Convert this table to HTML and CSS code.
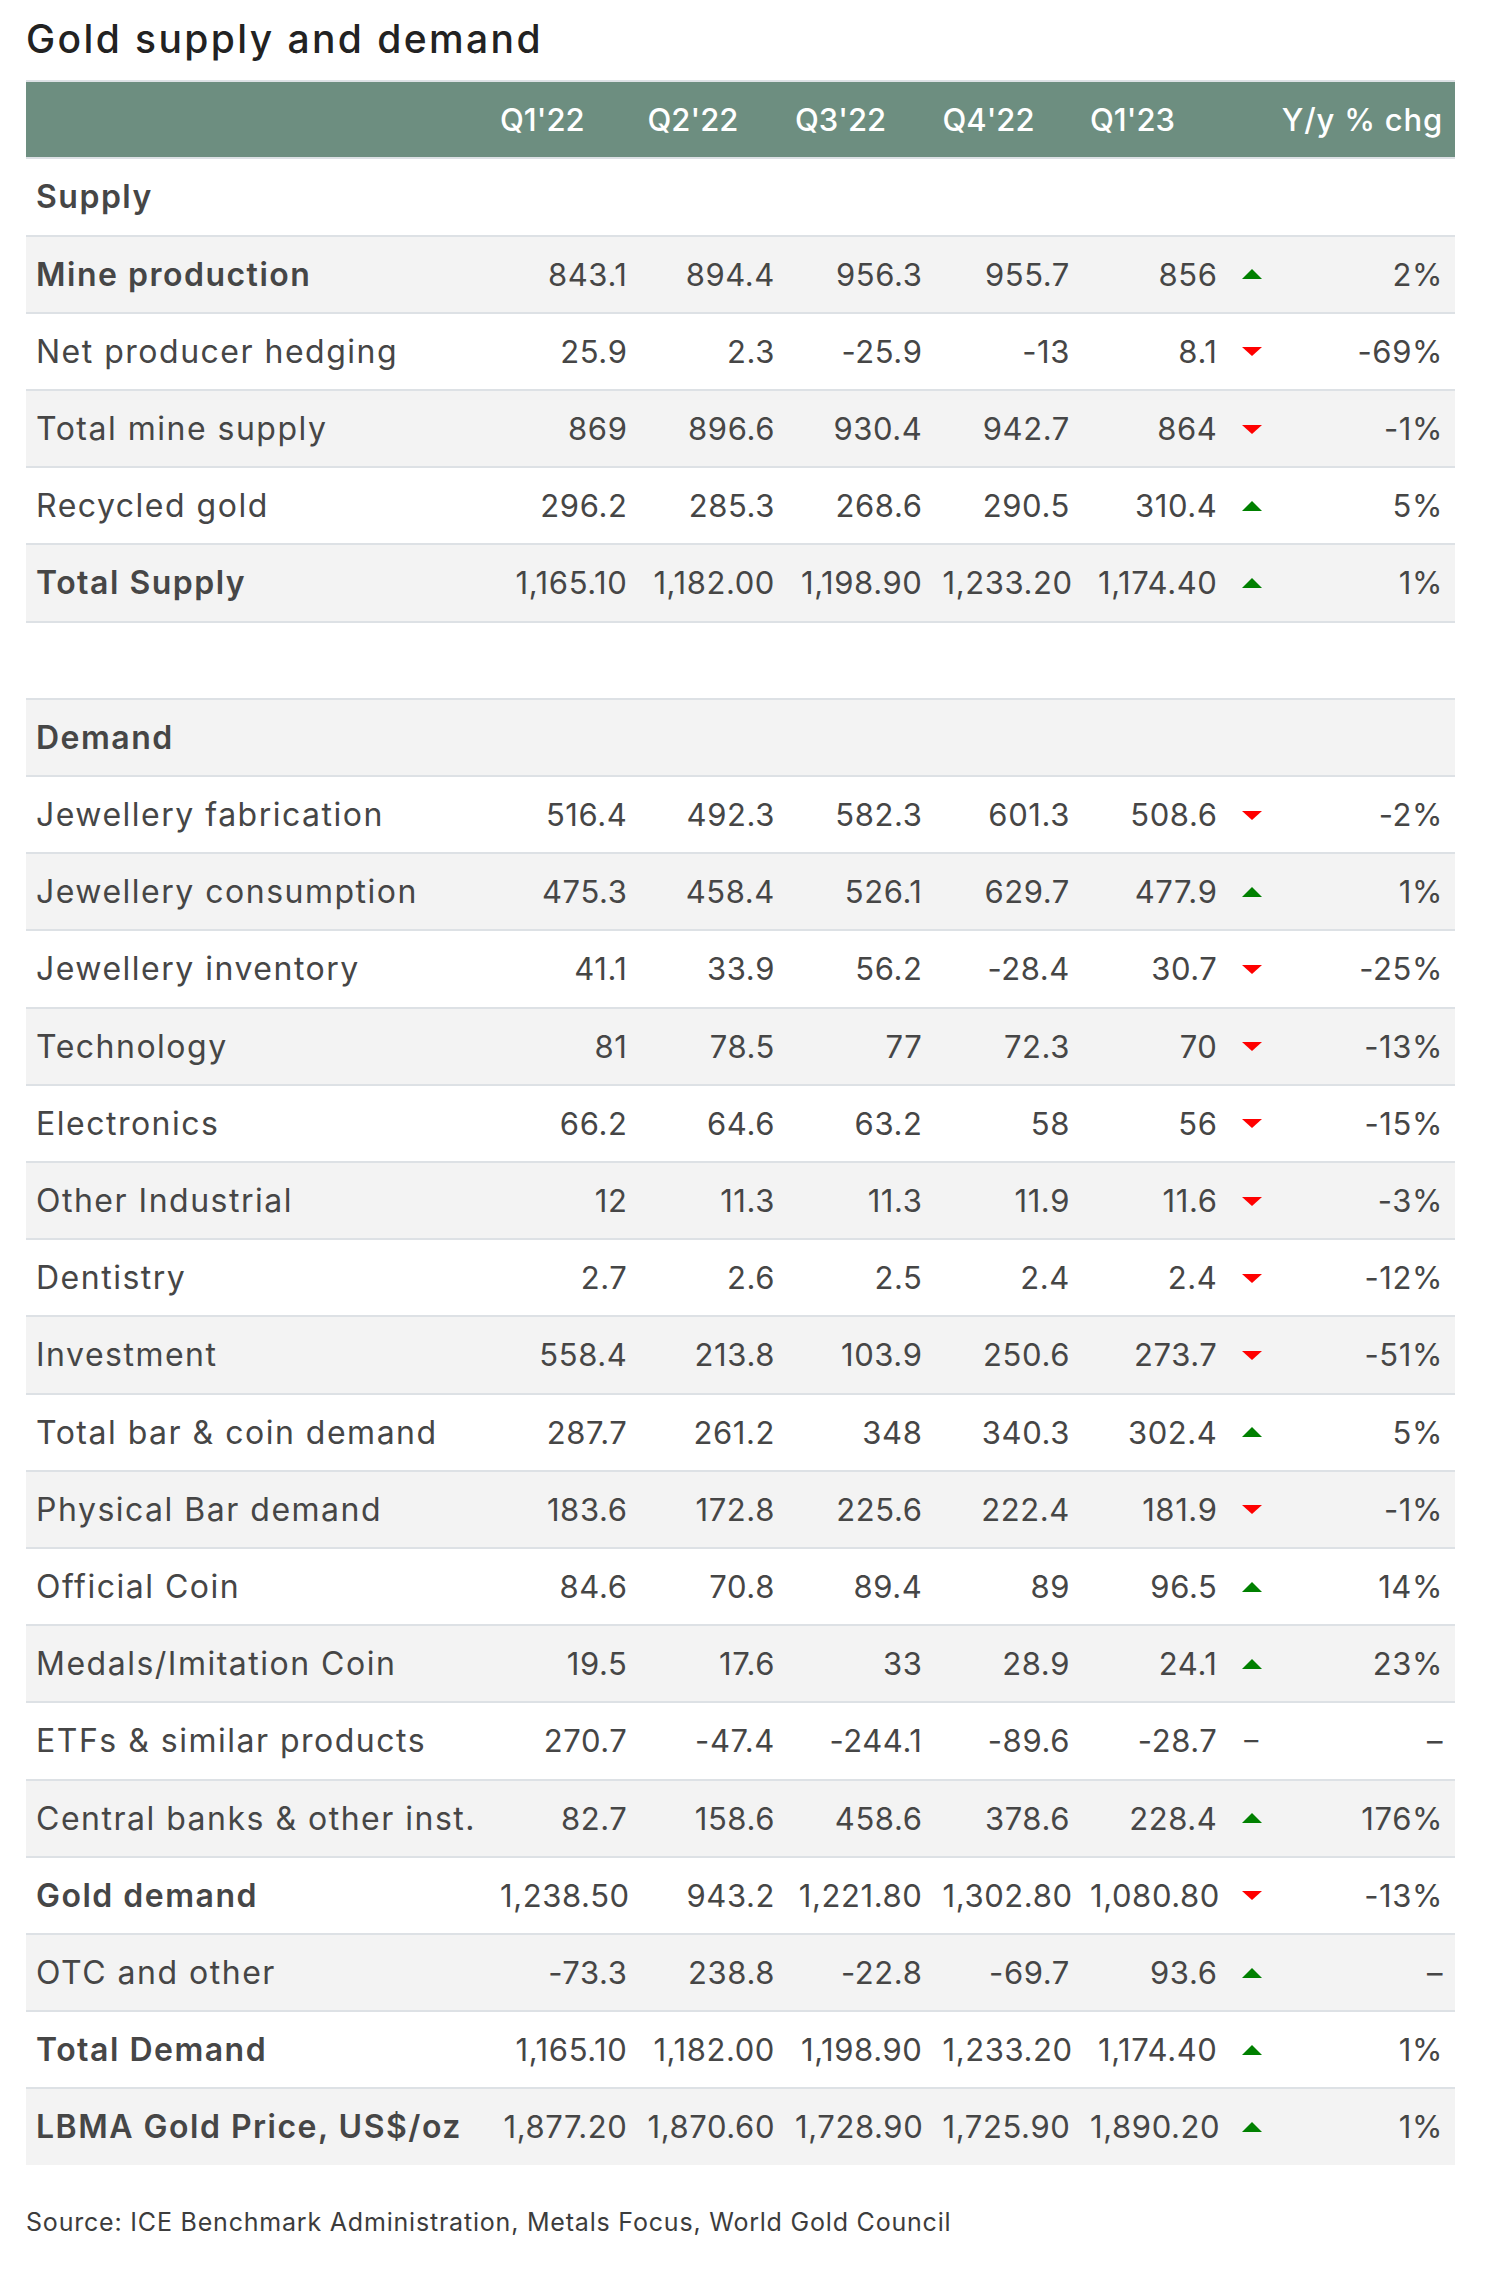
FILE: index.html
```html
<!DOCTYPE html>
<html lang="en">
<head>
<meta charset="utf-8">
<title>Gold supply and demand</title>
<link rel="stylesheet" href="styles.css">
</head>
<body>
<div class="page">
  <h1 class="title">Gold supply and demand</h1>
  <table class="gsd">
    <colgroup>
      <col class="c-label"><col class="c-q"><col class="c-q"><col class="c-q"><col class="c-q"><col class="c-q"><col class="c-chg">
    </colgroup>
    <thead>
      <tr>
        <th class="lbl"></th>
        <th>Q1'22</th>
        <th>Q2'22</th>
        <th>Q3'22</th>
        <th>Q4'22</th>
        <th>Q1'23</th>
        <th class="chg-h">Y/y % chg</th>
      </tr>
    </thead>
    <tbody>
      <tr class="first"><td class="lbl b">Supply</td><td></td><td></td><td></td><td></td><td></td><td></td></tr>
      <tr class="alt"><td class="lbl b">Mine production</td><td>843.1</td><td>894.4</td><td>956.3</td><td>955.7</td><td>856</td><td class="chg"><div class="chg-in"><svg class="tri" viewBox="0 0 20 10"><polygon class="up" points="0,10 10,0 20,10"/></svg><span>2%</span></div></td></tr>
      <tr><td class="lbl">Net producer hedging</td><td>25.9</td><td>2.3</td><td>-25.9</td><td>-13</td><td>8.1</td><td class="chg"><div class="chg-in"><svg class="tri" viewBox="0 0 20 10"><polygon class="down" points="0,1 20,1 10,10"/></svg><span>-69%</span></div></td></tr>
      <tr class="alt"><td class="lbl">Total mine supply</td><td>869</td><td>896.6</td><td>930.4</td><td>942.7</td><td>864</td><td class="chg"><div class="chg-in"><svg class="tri" viewBox="0 0 20 10"><polygon class="down" points="0,1 20,1 10,10"/></svg><span>-1%</span></div></td></tr>
      <tr><td class="lbl">Recycled gold</td><td>296.2</td><td>285.3</td><td>268.6</td><td>290.5</td><td>310.4</td><td class="chg"><div class="chg-in"><svg class="tri" viewBox="0 0 20 10"><polygon class="up" points="0,10 10,0 20,10"/></svg><span>5%</span></div></td></tr>
      <tr class="alt"><td class="lbl b">Total Supply</td><td>1,165.10</td><td>1,182.00</td><td>1,198.90</td><td>1,233.20</td><td>1,174.40</td><td class="chg"><div class="chg-in"><svg class="tri" viewBox="0 0 20 10"><polygon class="up" points="0,10 10,0 20,10"/></svg><span>1%</span></div></td></tr>
      <tr class="spacer"><td class="lbl">&nbsp;</td><td></td><td></td><td></td><td></td><td></td><td></td></tr>
      <tr class="alt"><td class="lbl b">Demand</td><td></td><td></td><td></td><td></td><td></td><td></td></tr>
      <tr><td class="lbl">Jewellery fabrication</td><td>516.4</td><td>492.3</td><td>582.3</td><td>601.3</td><td>508.6</td><td class="chg"><div class="chg-in"><svg class="tri" viewBox="0 0 20 10"><polygon class="down" points="0,1 20,1 10,10"/></svg><span>-2%</span></div></td></tr>
      <tr class="alt"><td class="lbl">Jewellery consumption</td><td>475.3</td><td>458.4</td><td>526.1</td><td>629.7</td><td>477.9</td><td class="chg"><div class="chg-in"><svg class="tri" viewBox="0 0 20 10"><polygon class="up" points="0,10 10,0 20,10"/></svg><span>1%</span></div></td></tr>
      <tr><td class="lbl">Jewellery inventory</td><td>41.1</td><td>33.9</td><td>56.2</td><td>-28.4</td><td>30.7</td><td class="chg"><div class="chg-in"><svg class="tri" viewBox="0 0 20 10"><polygon class="down" points="0,1 20,1 10,10"/></svg><span>-25%</span></div></td></tr>
      <tr class="alt"><td class="lbl">Technology</td><td>81</td><td>78.5</td><td>77</td><td>72.3</td><td>70</td><td class="chg"><div class="chg-in"><svg class="tri" viewBox="0 0 20 10"><polygon class="down" points="0,1 20,1 10,10"/></svg><span>-13%</span></div></td></tr>
      <tr><td class="lbl">Electronics</td><td>66.2</td><td>64.6</td><td>63.2</td><td>58</td><td>56</td><td class="chg"><div class="chg-in"><svg class="tri" viewBox="0 0 20 10"><polygon class="down" points="0,1 20,1 10,10"/></svg><span>-15%</span></div></td></tr>
      <tr class="alt"><td class="lbl">Other Industrial</td><td>12</td><td>11.3</td><td>11.3</td><td>11.9</td><td>11.6</td><td class="chg"><div class="chg-in"><svg class="tri" viewBox="0 0 20 10"><polygon class="down" points="0,1 20,1 10,10"/></svg><span>-3%</span></div></td></tr>
      <tr><td class="lbl">Dentistry</td><td>2.7</td><td>2.6</td><td>2.5</td><td>2.4</td><td>2.4</td><td class="chg"><div class="chg-in"><svg class="tri" viewBox="0 0 20 10"><polygon class="down" points="0,1 20,1 10,10"/></svg><span>-12%</span></div></td></tr>
      <tr class="alt"><td class="lbl">Investment</td><td>558.4</td><td>213.8</td><td>103.9</td><td>250.6</td><td>273.7</td><td class="chg"><div class="chg-in"><svg class="tri" viewBox="0 0 20 10"><polygon class="down" points="0,1 20,1 10,10"/></svg><span>-51%</span></div></td></tr>
      <tr><td class="lbl">Total bar &amp; coin demand</td><td>287.7</td><td>261.2</td><td>348</td><td>340.3</td><td>302.4</td><td class="chg"><div class="chg-in"><svg class="tri" viewBox="0 0 20 10"><polygon class="up" points="0,10 10,0 20,10"/></svg><span>5%</span></div></td></tr>
      <tr class="alt"><td class="lbl">Physical Bar demand</td><td>183.6</td><td>172.8</td><td>225.6</td><td>222.4</td><td>181.9</td><td class="chg"><div class="chg-in"><svg class="tri" viewBox="0 0 20 10"><polygon class="down" points="0,1 20,1 10,10"/></svg><span>-1%</span></div></td></tr>
      <tr><td class="lbl">Official Coin</td><td>84.6</td><td>70.8</td><td>89.4</td><td>89</td><td>96.5</td><td class="chg"><div class="chg-in"><svg class="tri" viewBox="0 0 20 10"><polygon class="up" points="0,10 10,0 20,10"/></svg><span>14%</span></div></td></tr>
      <tr class="alt"><td class="lbl">Medals/Imitation Coin</td><td>19.5</td><td>17.6</td><td>33</td><td>28.9</td><td>24.1</td><td class="chg"><div class="chg-in"><svg class="tri" viewBox="0 0 20 10"><polygon class="up" points="0,10 10,0 20,10"/></svg><span>23%</span></div></td></tr>
      <tr><td class="lbl">ETFs &amp; similar products</td><td>270.7</td><td>-47.4</td><td>-244.1</td><td>-89.6</td><td>-28.7</td><td class="chg"><div class="chg-in"><span class="nodir">–</span><span>–</span></div></td></tr>
      <tr class="alt"><td class="lbl">Central banks &amp; other inst.</td><td>82.7</td><td>158.6</td><td>458.6</td><td>378.6</td><td>228.4</td><td class="chg"><div class="chg-in"><svg class="tri" viewBox="0 0 20 10"><polygon class="up" points="0,10 10,0 20,10"/></svg><span>176%</span></div></td></tr>
      <tr><td class="lbl b">Gold demand</td><td>1,238.50</td><td>943.2</td><td>1,221.80</td><td>1,302.80</td><td>1,080.80</td><td class="chg"><div class="chg-in"><svg class="tri" viewBox="0 0 20 10"><polygon class="down" points="0,1 20,1 10,10"/></svg><span>-13%</span></div></td></tr>
      <tr class="alt"><td class="lbl">OTC and other</td><td>-73.3</td><td>238.8</td><td>-22.8</td><td>-69.7</td><td>93.6</td><td class="chg"><div class="chg-in"><svg class="tri" viewBox="0 0 20 10"><polygon class="up" points="0,10 10,0 20,10"/></svg><span>–</span></div></td></tr>
      <tr><td class="lbl b">Total Demand</td><td>1,165.10</td><td>1,182.00</td><td>1,198.90</td><td>1,233.20</td><td>1,174.40</td><td class="chg"><div class="chg-in"><svg class="tri" viewBox="0 0 20 10"><polygon class="up" points="0,10 10,0 20,10"/></svg><span>1%</span></div></td></tr>
      <tr class="alt"><td class="lbl b">LBMA Gold Price, US$/oz</td><td>1,877.20</td><td>1,870.60</td><td>1,728.90</td><td>1,725.90</td><td>1,890.20</td><td class="chg"><div class="chg-in"><svg class="tri" viewBox="0 0 20 10"><polygon class="up" points="0,10 10,0 20,10"/></svg><span>1%</span></div></td></tr>
    </tbody>
  </table>
  <p class="source">Source: ICE Benchmark Administration, Metals Focus, World Gold Council</p>
</div>
</body>
</html>
```

FILE: styles.css
```css
html, body {
  margin: 0;
  padding: 0;
  background: #ffffff;
}

body {
  font-family: "Inter", "Noto Sans", "DejaVu Sans", sans-serif;
  color: #464646;
}

.page {
  padding: 0 35px 0 26px;
}

.title {
  margin: 0 0 3px 0;
  font-size: 39px;
  line-height: 77px;
  font-weight: 500;
  color: #222222;
  letter-spacing: 2.4px;
}

.gsd {
  width: 1429px;
  table-layout: fixed;
  border-collapse: separate;
  border-spacing: 0;
}

.c-label { width: 464px; }
.c-q { width: 147.5px; }
.c-chg { width: 227.5px; }

.gsd th {
  background: #6d8e80;
  color: #ffffff;
  font-size: 31px;
  font-weight: 500;
  line-height: 75px;
  text-align: left;
  padding: 0 10px;
  border-top: 2px solid #dde1e5;
  border-bottom: 2px solid #dde1e5;
  white-space: nowrap;
}

.gsd th.chg-h {
  text-align: right;
  padding-right: 12px;
  letter-spacing: 0.8px;
}

.gsd td {
  font-size: 31px;
  font-weight: 400;
  line-height: 75.2px;
  letter-spacing: 0.6px;
  text-align: right;
  padding: 0 10px;
  border-top: 2px solid #dde1e5;
  white-space: nowrap;
}

.gsd tr.first td {
  border-top: none;
  line-height: 75.5px;
}

.gsd tr.alt td {
  background: #f3f3f3;
}

.gsd td.lbl {
  text-align: left;
  padding-left: 10px;
  font-size: 32px;
  letter-spacing: 1.5px;
}

.gsd td.b {
  font-weight: 600;
}

.gsd td.chg {
  padding: 0 12px 0 14px;
}

.chg-in {
  display: flex;
  align-items: center;
  justify-content: space-between;
}

.tri {
  width: 20px;
  height: 10px;
  display: block;
}

.up { fill: #008000; }
.down { fill: #ff0000; }

.nodir {
  width: 20px;
  text-align: center;
  font-size: 28px;
}

.source {
  margin: 37px 0 0 0;
  font-size: 25px;
  line-height: 40px;
  letter-spacing: 0.8px;
  color: #3c3c3c;
}
```
